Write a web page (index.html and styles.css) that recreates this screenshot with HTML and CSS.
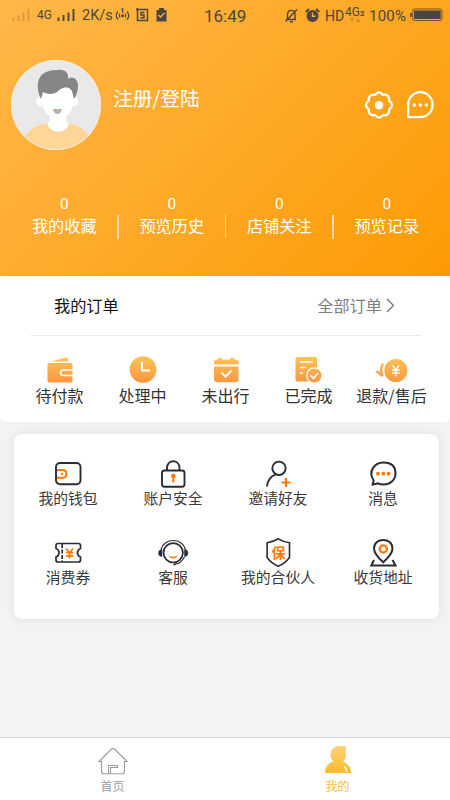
FILE: index.html
```html
<!DOCTYPE html>
<html lang="zh-CN">
<head>
<meta charset="utf-8">
<meta name="viewport" content="width=device-width, initial-scale=1">
<title>我的</title>
<link rel="stylesheet" href="styles.css">
</head>
<body>
<svg class="defs" width="0" height="0" aria-hidden="true">
  <defs>
    <linearGradient id="warm" gradientUnits="userSpaceOnUse" x1="0" y1="2" x2="0" y2="28"><stop offset="0" stop-color="#ffc558"/><stop offset="1" stop-color="#fb9742"/></linearGradient>
    <linearGradient id="gold" x1="0" y1="0" x2="0" y2="1"><stop offset="0" stop-color="#fdd27a"/><stop offset="1" stop-color="#fdb92c"/></linearGradient>
  </defs>
</svg>
<header class="hero">
  <div class="status">
    <svg class="st-sig" width="20" height="14" viewBox="0 0 20 14" stroke-width="1.8" stroke="#d7983c"><path d="M1.5 13V9.500M6.500 13V7M11.500 13V4.500M16.500 13V1"/></svg>
    <span class="st-net">4G</span>
    <svg class="st-sig2" width="20" height="14" viewBox="0 0 20 14" stroke-width="1.9" stroke="#4b4640"><path d="M1.500 13V9.500M6.500 13V7M11.500 13V4.500M16.500 13V1"/></svg>
    <span class="st-speed">2K/s</span>
    <svg class="st-hot" width="15" height="14" viewBox="0 0 15 14" fill="none" stroke="#4b4640" stroke-width="1.200"><path d="M3 3.500Q-.5 7.500 3 11.500M5 5.500Q3.500 7.500 5 9.500M12 3.500Q15.500 7.500 12 11.500M10 5.500Q11.500 7.500 10 9.500M6.500 1.500 7.700.8V5"/><circle cx="7.500" cy="7.800" r=".9" fill="#4b4640"/></svg>
    <svg class="st-s" width="13" height="14" viewBox="0 0 13 14" fill="none" stroke="#4b4640" stroke-width="1.500"><path d="M0 1.500H11.500V12.500H1.500V0M8.500 4.500H5V7H8V9.700H4.500"/></svg>
    <svg class="st-clip" width="11" height="14" viewBox="0 0 11 14"><path d="M1 2H3V0H8V2H10.500V13.500H.5V2Z" fill="#4b4640"/><path d="m2.500 7 2 2L8.500 5" fill="none" stroke="#ffae36" stroke-width="1.500"/></svg>
    <time class="st-time">16:49</time>
    <svg class="st-bell" width="15" height="15" viewBox="0 0 15 15" fill="none" stroke="#4b4640" stroke-width="1.400"><path d="M2 11.500H12M3.500 11V6.500C3.500 1 11 1 11 6.500V11M1.500 13.500 13 1.500M6 13.700H9"/></svg>
    <svg class="st-alarm" width="15" height="15" viewBox="0 0 15 15"><circle cx="7.500" cy="8" r="6" fill="#4b4640"/><path d="M.8 4 4 1M14.200 4 11 1" stroke="#4b4640" stroke-width="2"/><path d="M7.500 4.500V8.300H10.500" fill="none" stroke="#ffae2d" stroke-width="1.400"/></svg>
    <span class="st-hd">HD</span>
    <span class="st-4g">4G<b>2</b><svg width="10" height="4" viewBox="0 0 10 4" fill="#c98a2b"><path d="M0 0H4L2 4ZM6 4H10L8 0Z"/></svg></span>
    <span class="st-pct">100%</span>
    <svg class="st-bat" width="33" height="14" viewBox="0 0 33 14"><rect x="2.700" y="1" width="29.300" height="11.500" rx="2" fill="none" stroke="#765329" stroke-width="1"/><rect x="4" y="2.500" width="26.700" height="8.500" fill="#4b4640"/><path d="M1 5V9" stroke="#4b4640" stroke-width="1.600"/></svg>
  </div>
  <div class="profile">
    <svg class="avatar" width="90" height="90" viewBox="0 0 90 90">
      <clipPath id="face"><circle cx="45" cy="45" r="45"/></clipPath>
      <g clip-path="url(#face)">
        <rect width="90" height="90" fill="#e9e9ea"/>
        <path d="M10 90C12 73 21 65 38 63H56C71 65 78 72 84 90Z" fill="#ffd598"/>
        <path d="M39 50H55V60Q55 62.500 58 63.200C56 74.500 39 74.500 36.500 63.200Q39 62.500 39 60Z" fill="#fff"/>
        <circle cx="29.500" cy="41.500" r="4.500" fill="#fff"/><circle cx="63" cy="41.500" r="4.500" fill="#fff"/>
        <path d="M30.500 28H63V38C63 50 56 59.500 47 59.500S30.500 50 30.500 38Z" fill="#fff"/>
        <path d="M30 39C23 24 27 9 47 10C54 9 58 13 57 19C61 15 67 19 67 25Q67 33 63 39L61 31C56 24 50 28 46 32Q39 36 32 32Z" fill="#858585"/>
        <path d="M42 49H51Q50 54 46.500 54T42 49Z" fill="#b9b1a7"/>
      </g>
      <circle cx="45" cy="45" r="44.500" fill="none" stroke="#f7eee0"/>
    </svg>
    <span class="login">注册/登陆</span>
    <svg class="gear" width="30" height="30" viewBox="0 0 30 30" fill="none" stroke="#fff" stroke-width="2.300" stroke-linejoin="round"><path d="M15 2.300Q17 2.300 18.700 4.800Q22.500 4 24 6Q25.500 7.800 25.200 10.700Q28 12.800 28 15T25.200 19.300Q25.600 22 24 24T18.700 25.200Q17 27.700 15 27.700T11.300 25.200Q7.700 25.800 6 24T4.800 19.300Q2 17.200 2 15T4.800 10.700Q4.400 7.800 6 6T11.300 4.800Q13 2.300 15 2.300Z"/><circle cx="15" cy="15.300" r="4.200" fill="#fff" stroke="none"/></svg>
    <svg class="chat" width="28" height="30" viewBox="0 0 28 30"><path d="M2.200 27.200V14.500A12.200 12.500 0 1 1 14.400 27.200Z" fill="none" stroke="#fff" stroke-width="2.300" stroke-linejoin="round"/><g fill="#fff"><circle cx="8.300" cy="15" r="1.700"/><circle cx="14.300" cy="15" r="1.700"/><circle cx="20.300" cy="15" r="1.700"/></g></svg>
  </div>
  <div class="stats">
    <div class="stat"><span class="count">0</span><span>我的收藏</span></div>
    <div class="stat"><span class="count">0</span><span>预览历史</span></div>
    <div class="stat"><span class="count">0</span><span>店铺关注</span></div>
    <div class="stat"><span class="count">0</span><span>预览记录</span></div>
  </div>
</header>
<section class="orders">
  <div class="orders-head"><h2>我的订单</h2><a class="all">全部订单<svg width="9" height="15" viewBox="0 0 9 15" fill="none" stroke="#777" stroke-width="1.400"><path d="m1 1 6.500 6.500L1 14"/></svg></a></div>
  <div class="order-list">
    <div class="order"><svg width="30" height="30" viewBox="0 0 30 30"><path d="M6 7.500 21 3.500Q23 3 23 5V7.500Z" fill="url(#warm)"/><rect x="2.500" y="9" width="25" height="19.500" rx="2" fill="url(#warm)"/><path d="M28 16H18.500Q15.500 16 15.500 18.700T18.500 21.500H28" fill="none" stroke="#fff" stroke-width="1.600"/></svg><span>待付款</span></div>
    <div class="order"><svg width="30" height="30" viewBox="0 0 30 30"><circle cx="15" cy="15.500" r="13.300" fill="url(#warm)"/><path d="M14 8V16.500H22" fill="none" stroke="#fff" stroke-width="2"/></svg><span>处理中</span></div>
    <div class="order"><svg width="30" height="30" viewBox="0 0 30 30"><path d="M3 10.500V8Q3 5.500 6 5.500H7V5Q9 2 11 5V5.500H19V5Q21 2 23 5V5.500H24Q27.500 5.500 27.500 8V10.500ZM3 12.500H27.500V25Q27.500 28.300 24 28.300H6.500Q3 28.300 3 25Z" fill="url(#warm)"/><path d="m10.500 18.500 4 4 6-6" fill="none" stroke="#fff" stroke-width="2"/></svg><span>未出行</span></div>
    <div class="order"><svg width="30" height="30" viewBox="0 0 30 30"><rect x="1.500" y="3" width="21.500" height="24.500" rx="2" fill="url(#warm)"/><path d="M6 8H18.500M6 13.500H12M6 19H9" stroke="#fff" stroke-width="1.700"/><circle cx="20.500" cy="21.500" r="7.700" fill="url(#warm)" stroke="#fff" stroke-width="1.300"/><path d="m16.500 21.500 3 3 4.500-5.500" fill="none" stroke="#fff" stroke-width="1.700"/></svg><span>已完成</span></div>
    <div class="order"><svg width="34" height="30" viewBox="0 0 34 30"><circle cx="20.800" cy="16.500" r="11.500" fill="url(#warm)"/><path d="m17.400 11.500 3.400 4 3.400-4M17 16H24.600M17 19H24.600M20.800 15.500V22.500" fill="none" stroke="#fff" stroke-width="1.300"/><path d="M8 9.500Q4.500 16 7.500 22L1.500 17.300" fill="none" stroke="url(#warm)" stroke-width="2.500"/></svg><span>退款/售后</span></div>
  </div>
</section>
<section class="tools">
  <div class="tool"><svg width="32" height="32" viewBox="0 0 32 32" fill="none" stroke="#2a2d38" stroke-width="1.900"><rect x="4" y="5" width="24.500" height="21.200" rx="4"/><g stroke="#ff7800"><path d="M5 12H11.500Q14.500 12.500 14.500 15.700T11.500 19.800H5"/><circle cx="10" cy="15.900" r=".5" stroke-width="1.400"/></g></svg><span>我的钱包</span></div>
  <div class="tool"><svg width="32" height="32" viewBox="0 0 32 32" fill="none" stroke="#2a2d38" stroke-width="1.900"><rect x="5" y="12.500" width="22.500" height="16.300" rx="2.500"/><path d="M10 12V10C10 1 22.500 1 22.500 10V12"/><circle cx="16.300" cy="18" r="2.300" fill="#ff7800" stroke="none"/><path d="M16.300 18V24.500" stroke="#ff7800" stroke-width="2"/></svg><span>账户安全</span></div>
  <div class="tool"><svg width="32" height="32" viewBox="0 0 32 32" fill="none" stroke="#2a2d38" stroke-width="1.900"><circle cx="17" cy="10.300" r="6.700"/><path d="M13.500 16.600Q6 19 5 28.500"/><path d="M19.500 24.500H28.500M24 20V29" stroke="#ff7800" stroke-width="2.200"/></svg><span>邀请好友</span></div>
  <div class="tool"><svg width="32" height="32" viewBox="0 0 32 32" fill="none" stroke="#2a2d38" stroke-width="2"><path d="M5.500 26.800 6.700 22.500C.5 13.500 7.500 4.500 16.500 4.500S28.500 9 28.500 15.500S23 26.500 16.500 26.500Q13.500 26.500 11 25.300Z" stroke-linejoin="round"/><g fill="#ff7800" stroke="none"><circle cx="11" cy="15.700" r="1.900"/><circle cx="16.300" cy="15.700" r="1.900"/><circle cx="21.600" cy="15.700" r="1.900"/></g></svg><span>消息</span></div>
  <div class="tool"><svg width="32" height="32" viewBox="0 0 32 32" fill="none" stroke="#2a2d38" stroke-width="1.700"><path d="M6 6.500H26.500Q28.500 6.500 28.500 8.500V11.500C24.500 13 24.500 18.500 28.500 20V23Q28.500 25 26.500 25H6Q4 25 4 23V20C8 18.500 8 13 4 11.500V8.500Q4 6.500 6 6.500Z"/><path d="M10.200 7V25" stroke-dasharray="4 1.500"/><path d="m14 11.500 3.500 4.500 3.500-4.500M14 15.700H21.300M14 18.800H21.300M17.500 15V21.500" stroke="#ff7800" stroke-width="1.700"/></svg><span>消费券</span></div>
  <div class="tool"><svg width="32" height="32" viewBox="0 0 32 32" fill="none" stroke="#2a2d38" stroke-width="1.700"><circle cx="16.200" cy="15.800" r="9.700"/><path d="M4 12.500C7 .5 25.500 .5 28.500 12.500M27.500 20Q24 26.500 18 27.200" stroke-width="1.200"/><path d="M5 12.500V19.500Q1.500 19.500 1.500 16T5 12.500ZM27.500 12.500V19.500Q31 19.500 31 16T27.500 12.500Z" fill="#2a2d38" stroke-width=".5"/><circle cx="17.500" cy="27.400" r="1.100" fill="#2a2d38" stroke="none"/><path d="M10.800 18Q16.200 21.300 21.600 18Q16.200 24.800 10.800 18Z" fill="#ff7800" stroke="none"/></svg><span>客服</span></div>
  <div class="tool"><svg width="32" height="32" viewBox="0 0 32 32"><path d="M16.300 1.800Q21 4.800 27.500 5.700V20.500Q23 26.500 16.300 29.300Q9.500 26.500 5.100 20.500V5.700Q11.500 4.800 16.300 1.800Z" fill="none" stroke="#2a2d38" stroke-width="1.600"/><text class="seal" x="16.400" y="21" text-anchor="middle">保</text></svg><span>我的合伙人</span></div>
  <div class="tool"><svg width="32" height="32" viewBox="0 0 32 32" fill="none" stroke="#2a2d38" stroke-width="2"><path d="M16.200 25.300Q7 17 7 11.500C7 0 25.500 0 25.500 11.500Q25.500 17 16.200 25.300Z"/><circle cx="16.300" cy="12" r="3.600" stroke="#ff7800" stroke-width="2.300"/><path d="M7 23 4.300 28.500H28.500L25.500 23"/></svg><span>收货地址</span></div>
</section>
<nav class="tabs">
  <a class="tab"><svg width="32" height="30" viewBox="0 0 32 30" fill="none" stroke="#9c9c9c" stroke-width="1.100"><path d="M4.500 15.500H2L14.500 3Q16 1.800 17.500 3L30 15.500H27.500V25.500Q27.500 27.800 25 27.800H7Q4.500 27.800 4.500 25.500ZM11.500 27.500V19.500H20.500V21.500H13.500V27.500"/></svg><span>首页</span></a>
  <a class="tab active"><svg width="32" height="30" viewBox="0 0 32 30"><path d="M3 27Q3 18 11.500 15.500Q8.500 13 8.500 8.500Q9 1 16 0H23.800V9Q24 13 21 15.500Q29 19 29 27Z" fill="url(#gold)"/><path d="M22.300 20.500Q25 22.500 24.500 26" fill="none" stroke="#fff" stroke-width="1.500"/></svg><span>我的</span></a>
</nav>
</body>
</html>
```
FILE: styles.css
```css
* { box-sizing: border-box; }
body {
  margin: 0;
  width: 450px;
  height: 800px;
  display: flex;
  flex-direction: column;
  overflow: hidden;
  background: #f3f3f3;
  color: #333;
  font-family: "Noto Sans CJK SC", sans-serif;
}
svg { display: block; flex: none; }
.defs { position: absolute; }

.hero {
  flex: none;
  height: 276px;
  background: linear-gradient(135deg, #ffb748 0%, #fea928 50%, #fc9a02 100%);
  color: #fff;
}
.status {
  height: 30px;
  display: flex;
  align-items: center;
  color: #4b4640;
  font-family: Roboto, sans-serif;
  font-size: 14.5px;
  line-height: 30px;
  white-space: nowrap;
}
.status > * { flex: none; }
.st-sig { margin-left: 12px; }
.st-net { width: 20px; margin-left: 5px; font-size: 12px; }
.st-speed { width: 32px; margin-left: 5px; font-size: 14.5px; padding-top: 1px; }
.st-hot { margin-left: 1px; }
.st-s { margin-left: 6px; }
.st-clip { margin-left: 7px; }
.st-time { width: 44px; margin-left: 37px; font-size: 17px; padding-top: 1px; }
.st-bell { margin-left: 36px; }
.st-alarm { margin-left: 6px; }
.st-hd { width: 19px; margin-left: 5px; font-size: 14px; padding-top: 1px; }
.st-4g { position: relative; width: 21px; margin-left: 1px; font-size: 12px; top: -2px; }
.st-4g b { font-size: 8px; }
.st-4g svg { position: absolute; left: 5px; top: 21px; }
.st-pct { width: 39px; margin-left: 3px; font-size: 15px; padding-top: 1px; letter-spacing: .2px; }
.st-bat { margin-left: 2px; }

.profile { display: flex; padding: 30px 16px 0 11px; height: 165px; }
.login { flex: 1; margin: 23px 0 0 12px; font-size: 19.8px; line-height: 30px; }
.gear { margin-top: 30px; }
.chat { margin: 30px 0 0 12px; }
.stats { display: flex; padding: 0 9.500px 0 10.500px; }
.stat {
  position: relative;
  width: 107.5px;
  display: flex;
  flex-direction: column;
  align-items: center;
  font-size: 16.2px;
  line-height: 24px;
}
.count { font-family: Roboto, sans-serif; font-size: 15.3px; line-height: 18px; }
.stat + .stat::before {
  content: "";
  position: absolute;
  left: -1px;
  top: 20px;
  width: 1.5px;
  height: 24px;
  background: #f1d9ae;
}

.orders { flex: none; height: 146px; background: #fff; border-radius: 0 0 5px 5px; }
.orders-head {
  display: flex;
  justify-content: space-between;
  align-items: center;
  height: 60px;
  margin: 0 29px 0 31px;
  padding: 0 26px 2px 23px;
  border-bottom: 1px solid #e8e8e8;
}
.orders-head h2 { margin: 0; color: #111; font-size: 16.2px; font-weight: 400; }
.all { display: flex; align-items: center; gap: 4px; color: #808080; font-size: 16.2px; }
.all svg { margin-top: 2px; }
.order-list { display: flex; padding: 18px 17px 0 18px; }
.order {
  width: 83px;
  display: flex;
  flex-direction: column;
  align-items: center;
  font-size: 16px;
  line-height: 22px;
}
.order span { white-space: nowrap; }

.tools {
  flex: none;
  display: grid;
  grid-template-columns: repeat(4, 105px);
  grid-auto-rows: 78.500px;
  width: 425px;
  height: 185px;
  margin: 12px 0 0 14px;
  padding: 24px 0 0 1.500px;
  border-radius: 8px;
  background: #fff;
  box-shadow: 0 0 10px rgba(0, 0, 0, .09);
}
.tool {
  display: flex;
  flex-direction: column;
  align-items: center;
  font-size: 14.8px;
  line-height: 20px;
  color: #3a3a3a;
}
.tool span { margin-top: -2px; }
.seal { font-size: 14px; font-weight: 700; fill: #ff7800; }

.tabs {
  flex: none;
  display: flex;
  height: 63px;
  margin-top: auto;
  border-top: 1.500px solid #d4d4d4;
  background: #fff;
}
.tab {
  width: 50%;
  padding-top: 8px;
  display: flex;
  flex-direction: column;
  align-items: center;
  font-size: 12px;
  line-height: 18px;
  color: #a0a0a0;
}
.tab span { margin-top: 1px; }
.tab.active { color: #fdbe3c; }
```
